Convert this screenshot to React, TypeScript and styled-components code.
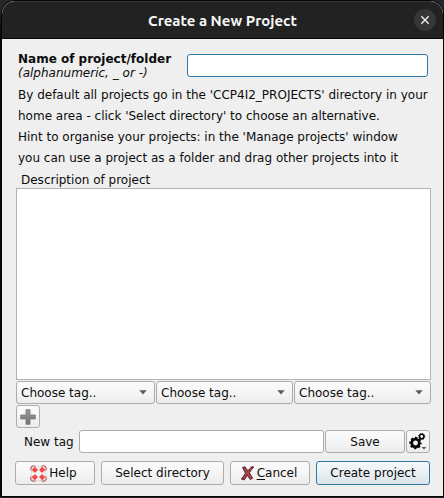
import React from 'react';
import styled, { createGlobalStyle, css } from 'styled-components';

const GlobalStyle = createGlobalStyle`
  * { box-sizing: border-box; }
  html, body { margin: 0; padding: 0; background: #08080a; overflow: hidden; }
  body { font-family: "DejaVu Sans", sans-serif; font-size: 12px; color: #0c0c0c; }
  button, input, textarea { font: inherit; color: inherit; margin: 0; outline: none; }
`;

const Desktop = styled.div`
  width: 444px;
  height: 498px;
  padding: 1px 1px 2px 2px;
  background: linear-gradient(#252629 0 12px, #09090b 30px, #09090b 496px, #242327 496px);
`;

const Dialog = styled.section`
  width: 441px;
  height: 495px;
  display: flex;
  flex-direction: column;
  border-radius: 13px 13px 0 0;
  overflow: hidden;
  background: #efefef;
  box-shadow: 0 0 0 1px #060606;
`;

const TitleBar = styled.header`
  height: 38px;
  flex: none;
  display: grid;
  grid-template-columns: 34px 1fr 34px;
  align-items: center;
  background: #222222;
  border-top: 1px solid #363636;
  border-bottom: 1px solid #080808;
  border-radius: 13px 13px 0 0;
`;

const Title = styled.h1`
  grid-column: 2;
  margin: 1px 0 0;
  text-align: center;
  font: 700 15px/20px Ubuntu, "Noto Sans", sans-serif;
  letter-spacing: 0;
  color: #f7f7f7;
  white-space: nowrap;
`;

const CloseButton = styled.button`
  width: 22px;
  height: 22px;
  padding: 0;
  border: 0;
  border-radius: 50%;
  background: #373737;
  display: grid;
  place-items: center;
  justify-self: end;
  && { margin-right: 7px; }
`;

const Body = styled.main`
  flex: 1;
  display: flex;
  flex-direction: column;
  padding: 15px 11px 0 14px;
`;

const NameRow = styled.div`
  display: flex;
  height: 24px;
  padding: 0 4px 0 2px;
`;

const NameLabel = styled.label`
  width: 169px;
  line-height: 14px;
  margin-top: -2px;
  white-space: nowrap;
  strong, em { display: block; }
`;

const frame = css`
  border: 1px solid #adadad;
  border-radius: 3px;
`;

const TextInput = styled.input<{ $focused?: boolean }>`
  ${frame}
  flex: 1;
  min-width: 0;
  height: 23px;
  background: #fff;
  border-color: ${p => (p.$focused ? '#3079a6' : '#adadad')};
`;

const Hint = styled.p`
  margin: 7px 0 0 2px;
  line-height: 21px;
  white-space: nowrap;
  span { display: block; }
`;

const DescriptionLabel = styled.label`
  margin: 4px 0 0 5px;
  line-height: 14px;
`;

const Description = styled.textarea`
  height: 192px;
  margin-top: 1px;
  width: 415px;
  resize: none;
  border: 1px solid #b3b3b3;
  border-radius: 0;
  background: #fff;
`;

const TagRow = styled.div`
  display: flex;
  gap: 1px;
  margin-top: 1px;
`;

const raised = css`
  ${frame}
  background: linear-gradient(#fbfbfb, #f5f5f5 50%, #ececec);
`;

const Combo = styled.button<{ $width: number }>`
  ${raised}
  width: ${p => p.$width}px;
  height: 23px;
  padding: 0 7px 0 4px;
  display: flex;
  align-items: center;
  justify-content: space-between;
`;

const IconButton = styled.button`
  ${raised}
  width: 24px;
  height: 23px;
  padding: 0;
  display: grid;
  place-items: center;
`;

const AddRow = styled.div`
  display: flex;
  height: 23px;
  margin-top: 1px;
`;

const NewTagRow = styled.div`
  display: flex;
  align-items: center;
  height: 23px;
  margin: 2px 1px 0 0;
  gap: 1px;
  padding-right: 1px;
`;

const NewTagLabel = styled.label`
  width: 62px;
  padding-left: 8px;
  white-space: nowrap;
`;

const Button = styled.button<{ $width: number; $primary?: boolean; $tall?: boolean; $icon?: boolean }>`
  ${raised}
  width: ${p => p.$width}px;
  height: ${p => (p.$tall ? 24 : 23)}px;
  padding: 0 ${p => (p.$icon ? 3 : 0)}px 0 0;
  display: flex;
  align-items: center;
  justify-content: center;
  gap: 2px;
  white-space: nowrap;
  ${p => p.$primary && css`
    border-color: #3079a6;
    background: linear-gradient(#f5f8fa, #eaf0f4 50%, #dce4e9);
  `}
`;

const Actions = styled.footer`
  display: flex;
  gap: 6px;
  margin: 8px 0 0 -1px;
`;

const Mnemonic = styled.span`
  text-decoration: underline;
  text-underline-offset: 2px;
`;

const CloseIcon = () => (
  <svg width="10" height="10" viewBox="0 0 10 10">
    <path d="M1.3 1.3l7.4 7.4M8.7 1.3L1.3 8.7" stroke="#f4f4f4" strokeWidth="1.35" />
  </svg>
);

const Arrow = () => (
  <svg width="8" height="5" viewBox="0 0 8 5">
    <path d="M.3.3h7.4L4 4.5z" fill="#5a5a5a" />
  </svg>
);

const PlusIcon = () => (
  <svg width="16" height="16" viewBox="0 0 16 16">
    <defs>
      <linearGradient id="plusFill" x2="0" y2="1">
        <stop stopColor="#9a9a9a" />
        <stop offset="1" stopColor="#747474" />
      </linearGradient>
    </defs>
    <path d="M6 .7h4V6h5.3v4H10v5.3H6V10H.7V6H6z" fill="url(#plusFill)" stroke="#767676" strokeWidth=".8" strokeLinejoin="round" />
  </svg>
);

const HelpIcon = () => (
  <svg width="17" height="17" viewBox="0 0 17 17">
    <circle cx="8.5" cy="8.5" r="5.3" fill="none" stroke="#d2d2d2" strokeWidth="5" />
    <circle cx="8.5" cy="8.5" r="5.2" fill="none" stroke="#f6f0f0" strokeWidth="3.8" />
    {[0, 90, 180, 270].map(angle => (
      <g key={angle} transform={`rotate(${angle} 8.5 8.5)`}>
        <path d="M1.2 5.4C-.1 2.2 2.2-.1 5.4 1.2" fill="none" stroke="#b8494d" strokeWidth="1.1" />
        <path d="M1.7 4.9L4.9 1.7 7.8 4.8 6.4 6.4 4.8 7.8z" fill="#f0494c" />
        <path d="M1.8 3.4L3.4 1.8" stroke="#f3c4c5" strokeWidth="1" />
      </g>
    ))}
  </svg>
);

const CancelIcon = () => (
  <svg width="15" height="15" viewBox="0 0 14 15">
    <path
      d="M2 1.5l2.5-.7 2.9 4.3C8.6 3.3 10 1.6 11.5.6l1.8.5c-1.8 1.6-3.2 3.7-4.4 5.7l3.2 5.4-2.3 1.4-3-4.4c-1.1 1.8-2 3.4-3.2 4.8L.8 13c1.7-1.8 3-3.8 4.2-5.9z"
      fill="#ad4149"
      stroke="#54262b"
      strokeWidth="1"
      strokeLinejoin="round"
    />
  </svg>
);

const GearIcon = () => (
  <svg width="20" height="19" viewBox="0 0 20 19">
    <circle cx="7.5" cy="11" r="3.8" fill="none" stroke="#080808" strokeWidth="2.7" />
    <circle cx="7.5" cy="11" r="5.2" fill="none" stroke="#080808" strokeWidth="2" strokeDasharray="2.25 1.83" strokeDashoffset="1.1" />
    <circle cx="13.7" cy="4.5" r="2.2" fill="none" stroke="#080808" strokeWidth="1.5" />
    <circle cx="13.7" cy="4.5" r="3.1" fill="none" stroke="#080808" strokeWidth="1" strokeDasharray="1.2 1.23" />
    <path d="M13.5 15h5L16 17.5z" fill="#5a5a5a" />
  </svg>
);

const comboWidths = [139, 137, 137];

export default function App() {
  return (
    <>
      <GlobalStyle />
      <Desktop>
        <Dialog>
          <TitleBar>
            <Title>Create a New Project</Title>
            <CloseButton aria-label="Close"><CloseIcon /></CloseButton>
          </TitleBar>
          <Body>
            <NameRow>
              <NameLabel htmlFor="name">
                <strong>Name of project/folder</strong>
                <em>(alphanumeric, _ or -)</em>
              </NameLabel>
              <TextInput id="name" $focused />
            </NameRow>
            <Hint>
              <span>By default all projects go in the 'CCP4I2_PROJECTS' directory in your</span>
              <span>home area - click 'Select directory' to choose an alternative.</span>
              <span>Hint to organise your projects: in the 'Manage projects' window</span>
              <span>you can use a project as a folder and drag other projects into it</span>
            </Hint>
            <DescriptionLabel htmlFor="description">Description of project</DescriptionLabel>
            <Description id="description" />
            <TagRow>
              {comboWidths.map((width, i) => (
                <Combo key={i} $width={width}>Choose tag..<Arrow /></Combo>
              ))}
            </TagRow>
            <AddRow>
              <IconButton aria-label="Add tag"><PlusIcon /></IconButton>
            </AddRow>
            <NewTagRow>
              <NewTagLabel htmlFor="tag">New tag</NewTagLabel>
              <TextInput id="tag" />
              <Button $width={80}>Save</Button>
              <IconButton aria-label="Tag options"><GearIcon /></IconButton>
            </NewTagRow>
            <Actions>
              <Button $width={80} $tall $icon><HelpIcon />Help</Button>
              <Button $width={123} $tall>Select directory</Button>
              <Button $width={80} $tall $icon><CancelIcon /><span><Mnemonic>C</Mnemonic>ancel</span></Button>
              <Button $width={114} $tall $primary>Create project</Button>
            </Actions>
          </Body>
        </Dialog>
      </Desktop>
    </>
  );
}
